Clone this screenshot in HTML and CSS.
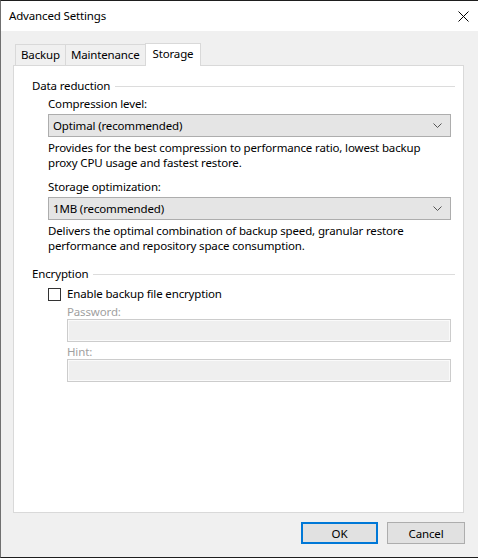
FILE: index.html
```html
<!DOCTYPE html>
<html lang="en">
<head>
<meta charset="utf-8">
<title>Advanced Settings</title>
<link rel="stylesheet" href="styles.css">
</head>
<body>
<div class="window">
  <div class="titlebar">
    <span class="title">Advanced Settings</span>
    <button class="close" aria-label="Close">
      <svg width="11" height="11" viewBox="0 0 11 11"><path d="M0.5 0.5 L10.5 10.5 M10.5 0.5 L0.5 10.5" stroke="#000" stroke-width="1" fill="none"/></svg>
    </button>
  </div>
  <div class="client">
    <div class="tabs">
      <div class="tab">Backup</div>
      <div class="tab">Maintenance</div>
      <div class="tab active">Storage</div>
    </div>
    <div class="panel">
      <div class="group-head"><span>Data reduction</span><i></i></div>
      <div class="group-body">
        <div class="label">Compression level:</div>
        <div class="combo"><span>Optimal (recommended)</span>
          <svg width="9" height="5" viewBox="0 0 9 5"><path d="M0.5 0.5 L4.5 4.5 L8.5 0.5" stroke="#555" stroke-width="1" fill="none"/></svg>
        </div>
        <p class="desc">Provides for the best compression to performance ratio, lowest backup proxy CPU usage and fastest restore.</p>
        <div class="label spaced">Storage optimization:</div>
        <div class="combo"><span>1MB (recommended)</span>
          <svg width="9" height="5" viewBox="0 0 9 5"><path d="M0.5 0.5 L4.5 4.5 L8.5 0.5" stroke="#555" stroke-width="1" fill="none"/></svg>
        </div>
        <p class="desc">Delivers the optimal combination of backup speed, granular restore performance and repository space consumption.</p>
      </div>
      <div class="group-head enc"><span>Encryption</span><i></i></div>
      <div class="group-body">
        <label class="check"><span class="box"></span>Enable backup file encryption</label>
        <div class="sub">
          <div class="label dim">Password:</div>
          <div class="field"></div>
          <div class="label dim">Hint:</div>
          <div class="field"></div>
        </div>
      </div>
    </div>
    <div class="footer">
      <button class="btn default">OK</button>
      <button class="btn">Cancel</button>
    </div>
  </div>
</div>
</body>
</html>
```
FILE: styles.css
```css
* { box-sizing: border-box; }

html, body {
  margin: 0;
  padding: 0;
  background: #f0f0f0;
}

body {
  font-family: "Noto Sans", "Open Sans", sans-serif;
  font-size: 11.5px;
  letter-spacing: -0.15px;
  color: #000;
}

.window {
  width: 478px;
  height: 558px;
  display: flex;
  flex-direction: column;
  border-top: 1px solid #1e1e1e;
  border-left: 1px solid #707070;
  border-bottom: 1px solid #1e1e1e;
}

.titlebar {
  height: 30px;
  background: #fff;
  display: flex;
  align-items: center;
  justify-content: space-between;
  padding-left: 8px;
}

.title {
  font-size: 11.5px;
  line-height: 16px;
}

.close {
  border: 0;
  background: transparent;
  width: 30px;
  height: 30px;
  padding: 0;
  display: flex;
  align-items: center;
  justify-content: center;
}

.client {
  flex: 1;
  background: #f0f0f0;
  padding: 12px 12px 0 12px;
  display: flex;
  flex-direction: column;
}

.tabs {
  display: flex;
  align-items: flex-end;
  padding-left: 2px;
  height: 22px;
}

.tab {
  height: 21px;
  padding: 0 5px;
  border: 1px solid #d9d9d9;
  border-bottom: 0;
  line-height: 19px;
  background: #f0f0f0;
}

.tab + .tab { margin-left: -1px; }

.tab.active {
  height: 23px;
  margin-bottom: -1px;
  background: #fff;
  padding: 0 7px;
  position: relative;
  z-index: 1;
  line-height: 19px;
}

.panel {
  width: 451px;
  height: 448px;
  background: #fff;
  border: 1px solid #d9d9d9;
  padding: 12px 8px 0 18px;
}

.group-head {
  display: flex;
  align-items: center;
  line-height: 16px;
}

.group-head i {
  flex: 1;
  height: 1px;
  background: #dcdcdc;
  margin-left: 5px;
  margin-top: 1px;
}

.group-head.enc { margin-top: 13px; }

.group-body {
  padding-left: 16px;
  padding-right: 4px;
}

.label {
  line-height: 16px;
  margin-top: 2px;
}

.label.spaced { margin-top: 9px; }

.combo {
  margin-top: 2px;
  height: 23px;
  border: 1px solid #adadad;
  background: #e5e5e5;
  display: flex;
  align-items: center;
  justify-content: space-between;
  padding: 0 8px 0 4px;
}

.desc {
  margin: 3px 0 0 0;
  line-height: 15px;
}

.check {
  display: flex;
  align-items: center;
  margin-top: 4px;
  line-height: 16px;
}

.box {
  width: 13px;
  height: 13px;
  border: 1px solid #333;
  background: #fff;
  margin-right: 6px;
}

.sub { padding-left: 19px; }

.label.dim {
  color: #a0a0a0;
  line-height: 15px;
}

.field {
  height: 23px;
  border: 1px solid #cccccc;
  background: #efefef;
  box-shadow: inset 0 0 0 1px #fafafa;
}

.footer {
  display: flex;
  justify-content: flex-end;
  gap: 9px;
  padding-top: 9px;
  padding-right: 1px;
}

.btn {
  width: 78px;
  height: 22px;
  border: 1px solid #adadad;
  background: #e1e1e1;
  font-family: inherit;
  font-size: 11.5px;
  letter-spacing: -0.15px;
  color: #000;
  padding: 0;
}

.btn.default {
  border: 2px solid #0078d7;
  width: 77px;
}
```
